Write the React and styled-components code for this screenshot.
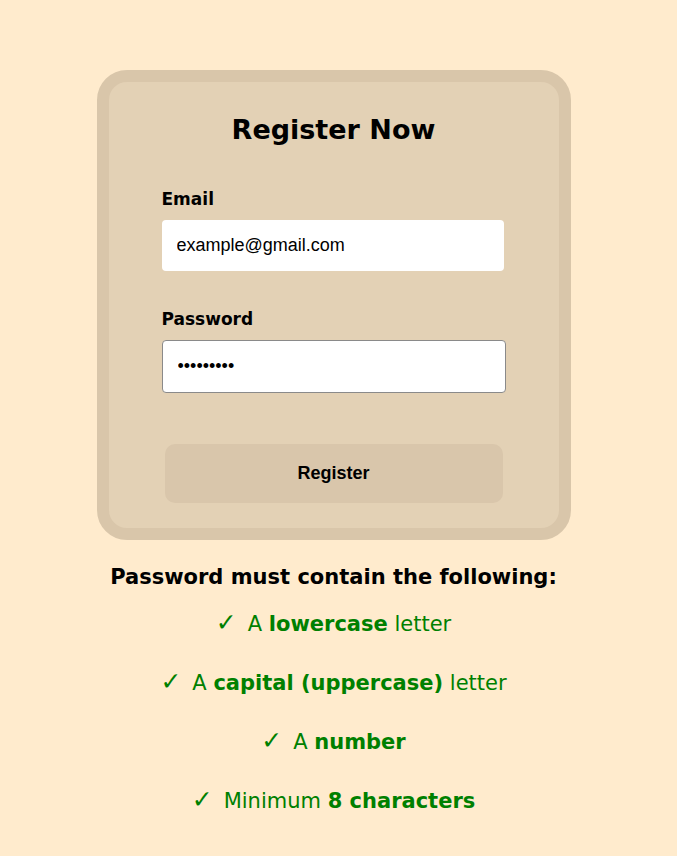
import React from "react"
import styled, { createGlobalStyle } from "styled-components"

const GlobalStyle = createGlobalStyle`
  html, body {
    margin: 0;
    padding: 0;
    background: #ffebcd;
    font-family: "DejaVu Sans", "Noto Sans", sans-serif;
  }
`

const rules = [
  { pre: "A ", strong: "lowercase", post: " letter" },
  { pre: "A ", strong: "capital (uppercase)", post: " letter" },
  { pre: "A ", strong: "number", post: "" },
  { pre: "Minimum ", strong: "8 characters", post: "" },
]

export default function App() {
  return (
    <>
      <GlobalStyle />
      <Page>
        <Card>
          <Title>Register Now</Title>
          <Form>
            <Field>
              <Label>Email</Label>
              <Input type="text" defaultValue="example@gmail.com" />
            </Field>
            <Field>
              <Label>Password</Label>
              <Input type="password" defaultValue="123456789" $outlined />
            </Field>
            <Button type="button">Register</Button>
          </Form>
        </Card>
        <Rules>
          <RulesTitle>Password must contain the following:</RulesTitle>
          {rules.map((r) => (
            <Rule key={r.strong}>
              <Check>✓</Check>
              {r.pre}
              <b>{r.strong}</b>
              {r.post}
            </Rule>
          ))}
        </Rules>
      </Page>
    </>
  )
}

const Page = styled.div`
  display: flex;
  flex-direction: column;
  align-items: center;
  padding: 70px 10px 0 0;
`

const Card = styled.div`
  width: 450px;
  box-sizing: content-box;
  background: #e3d1b5;
  border: 12px solid #d9c6aa;
  border-radius: 30px;
  padding: 30px 0 25px;
`

const Title = styled.h1`
  margin: 0 0 39px;
  text-align: center;
  font-size: 27px;
  font-weight: 700;
  line-height: 36px;
  color: #000;
`

const Form = styled.div`
  display: flex;
  flex-direction: column;
  padding: 0 53px;
`

const Field = styled.div`
  display: flex;
  flex-direction: column;
  margin-bottom: 36px;

  &:nth-child(2) {
    margin-bottom: 51px;
  }
`

const Label = styled.label`
  font-size: 17px;
  font-weight: 700;
  line-height: 24px;
  margin-bottom: 9px;
  color: #000;
`

const Input = styled.input`
  box-sizing: border-box;
  width: ${(p) => (p.$outlined ? "344px" : "342px")};
  height: ${(p) => (p.$outlined ? "53px" : "51px")};
  padding: 0 15px;
  border: ${(p) => (p.$outlined ? "1px solid #8a8a8a" : "none")};
  border-radius: 4px;
  background: #fff;
  font-family: "Liberation Sans", Arial, sans-serif;
  font-size: 18px;
  color: #000;
  outline: none;
`

const Button = styled.button`
  align-self: flex-start;
  margin-left: 3px;
  width: 338px;
  height: 59px;
  border: none;
  border-radius: 10px;
  background: #d9c6ab;
  font-family: "Liberation Sans", Arial, sans-serif;
  font-size: 18px;
  font-weight: 700;
  color: #000;
`

const Rules = styled.div`
  display: flex;
  flex-direction: column;
  align-items: center;
  margin-top: 22px;
`

const RulesTitle = styled.h3`
  margin: 0 0 17px;
  font-size: 21px;
  font-weight: 700;
  line-height: 30px;
  color: #000;
`

const Rule = styled.p`
  margin: 0 0 29px;
  font-size: 21px;
  font-weight: 400;
  line-height: 30px;
  height: 30px;
  color: #008000;

  b {
    font-weight: 700;
  }
`

const Check = styled.span`
  font-size: 25px;
  font-weight: 700;
  line-height: 20px;
  margin-right: 11px;
`
